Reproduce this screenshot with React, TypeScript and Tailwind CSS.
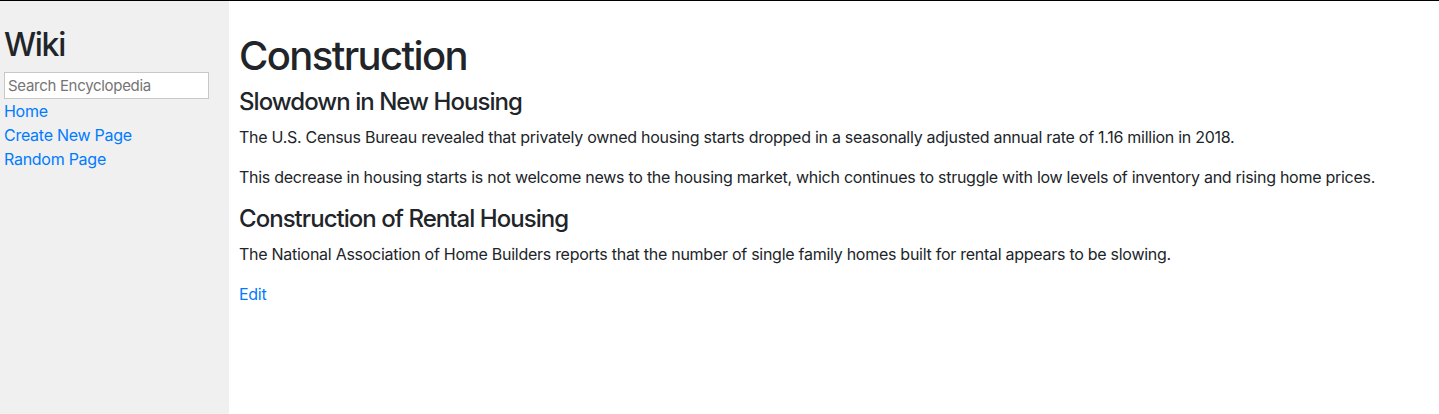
export default function App() {
  const font = { fontFamily: 'Inter, "Noto Sans", sans-serif' };
  return (
    <div
      className="flex min-h-[414px] border-t border-black text-[#212529] text-base leading-6 tracking-[-0.27px]"
      style={font}
    >
      <aside className="w-[229px] shrink-0 bg-[#f0f0f0] pl-[4px] pt-[25px]">
        <h2 className="text-[32px] leading-[1.2] font-medium tracking-[-0.04em] mb-2">Wiki</h2>
        <form>
          <input
            type="text"
            placeholder="Search Encyclopedia"
            className="block w-[205px] h-[27px] bg-white border border-[#c8c8c8] px-[3px] text-[15px] tracking-[-0.3px] placeholder:text-[#757575] outline-none"
          />
        </form>
        <div><a href="#" className="text-[#007bff]">Home</a></div>
        <div><a href="#" className="text-[#007bff]">Create New Page</a></div>
        <div><a href="#" className="text-[#007bff]">Random Page</a></div>
      </aside>
      <main className="flex-1 pl-[10px] pt-[31px]">
        <h1 className="text-[40px] leading-[1.2] font-medium tracking-[-0.04em] mb-2">Construction</h1>
        <h3 className="text-2xl leading-[1.2] font-medium tracking-[-0.04em] mb-2">Slowdown in New Housing</h3>
        <p className="mb-4">
          The U.S. Census Bureau revealed that privately owned housing starts dropped in a seasonally adjusted annual rate of 1.16 million in 2018.
        </p>
        <p className="mb-4">
          This decrease in housing starts is not welcome news to the housing market, which continues to struggle with low levels of inventory and rising home prices.
        </p>
        <h3 className="text-2xl leading-[1.2] font-medium tracking-[-0.04em] mb-2">Construction of Rental Housing</h3>
        <p className="mb-4">
          The National Association of Home Builders reports that the number of single family homes built for rental appears to be slowing.
        </p>
        <a href="#" className="text-[#007bff]">Edit</a>
      </main>
    </div>
  );
}
